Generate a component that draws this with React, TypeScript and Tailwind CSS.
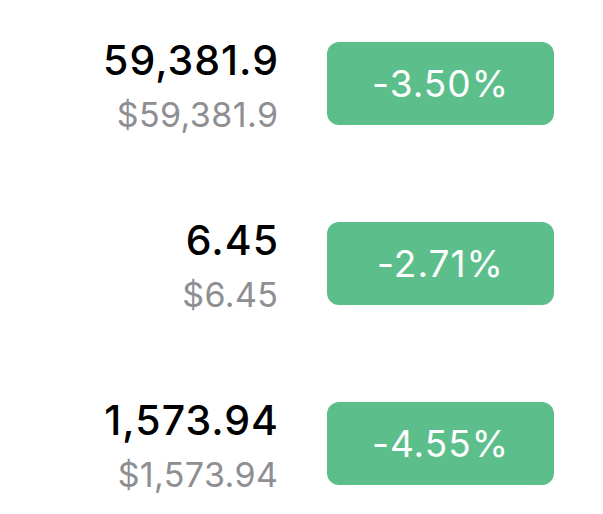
const rows = [
  { amount: '59,381.9', usd: '$59,381.9', change: '-3.50%' },
  { amount: '6.45', usd: '$6.45', change: '-2.71%' },
  { amount: '1,573.94', usd: '$1,573.94', change: '-4.55%' },
];

export default function App() {
  return (
    <div className="w-[603px] h-[514px] bg-white font-['Inter',sans-serif] pt-[42px] flex flex-col gap-[97px]">
      {rows.map((r) => (
        <div key={r.amount} className="flex items-center h-[83px]">
          <div className="w-[278px] pt-[8px] flex flex-col items-end">
            <div className="text-[41px] leading-[44px] font-medium tracking-[1px] mr-[-1px] text-black">{r.amount}</div>
            <div className="mt-[11px] text-[34px] leading-[44px] tracking-[0.4px] mr-[-0.4px] text-[#8e8e93]">{r.usd}</div>
          </div>
          <div className="ml-[49px] w-[227px] h-[83px] rounded-[12px] bg-[#5cbf8b] flex items-center justify-center">
            <span className="text-[37px] tracking-[1px] text-white">{r.change}</span>
          </div>
        </div>
      ))}
    </div>
  );
}
